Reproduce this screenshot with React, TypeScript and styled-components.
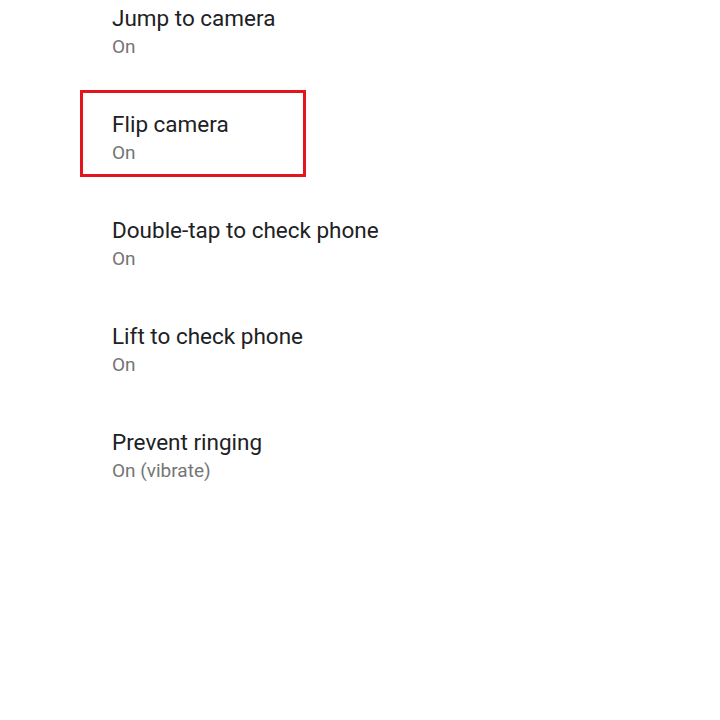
import * as React from 'react';
import styled, { createGlobalStyle } from 'styled-components';

const GlobalStyle = createGlobalStyle`
  html, body {
    margin: 0;
    padding: 0;
    background: #ffffff;
  }
  body {
    font-family: Roboto, "Noto Sans", "Liberation Sans", sans-serif;
  }
`;

const Screen = styled.div`
  width: 720px;
  height: 720px;
  overflow: hidden;
  background: #ffffff;
`;

const List = styled.div`
  display: flex;
  flex-direction: column;
  align-items: flex-start;
  gap: 19px;
  margin-top: -16px;
  padding-left: 80px;
`;

const Item = styled.div<{ $highlight?: boolean }>`
  display: flex;
  flex-direction: column;
  gap: 3px;
  box-sizing: border-box;
  min-width: 226px;
  height: 87px;
  padding: 17px 26px 9px 29px;
  border: 3px solid ${(props) => (props.$highlight ? '#e3141b' : 'transparent')};
`;

const Title = styled.div`
  font-size: 22.5px;
  line-height: 28px;
  color: #202124;
  white-space: nowrap;
`;

const Summary = styled.div`
  font-size: 19px;
  line-height: 24px;
  color: #757575;
  white-space: nowrap;
`;

const settings = [
  { title: 'Jump to camera', summary: 'On' },
  { title: 'Flip camera', summary: 'On', highlight: true },
  { title: 'Double-tap to check phone', summary: 'On' },
  { title: 'Lift to check phone', summary: 'On' },
  { title: 'Prevent ringing', summary: 'On (vibrate)' },
];

export default function App() {
  return (
    <Screen>
      <GlobalStyle />
      <List>
        {settings.map((s) => (
          <Item key={s.title} $highlight={s.highlight}>
            <Title>{s.title}</Title>
            <Summary>{s.summary}</Summary>
          </Item>
        ))}
      </List>
    </Screen>
  );
}
